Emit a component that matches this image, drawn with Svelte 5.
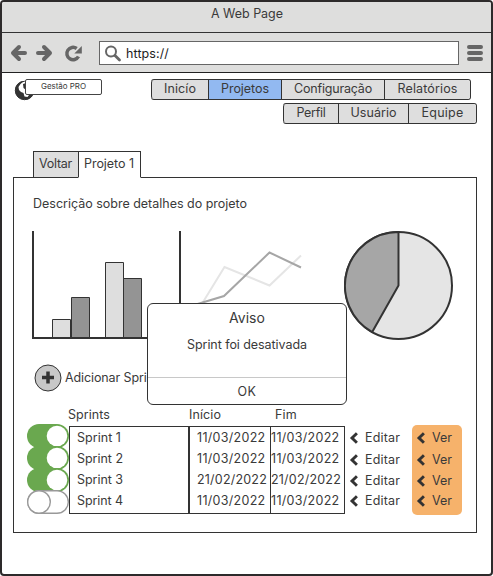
<script>
  const mainNav = [
    { label: 'Inicío', size: 57, text: 32 },
    { label: 'Projetos', size: 73, text: 48, active: true },
    { label: 'Configuração', size: 103, text: 78 },
    { label: 'Relatórios', size: 86, text: 60 },
  ];
  const userNav = [
    { label: 'Perfil', size: 55, text: 29 },
    { label: 'Usuário', size: 70, text: 46 },
    { label: 'Equipe', size: 68, text: 42 },
  ];
  const sprints = [
    { name: 'Sprint 1', start: '11/03/2022', end: '11/03/2022', on: true, h: 22 },
    { name: 'Sprint 2', start: '11/03/2022', end: '11/03/2022', on: true, h: 22 },
    { name: 'Sprint 3', start: '21/02/2022', end: '21/02/2022', on: true, h: 20 },
    { name: 'Sprint 4', start: '11/03/2022', end: '11/03/2022', on: false, h: 20 },
  ];

  // Spreads the letters of a label over the given width.
  function fit(node, width) {
    const natural = node.getBoundingClientRect().width;
    node.style.letterSpacing = `${(width - natural) / node.textContent.length}px`;
  }
</script>

{#snippet chevron()}
  <svg width="9" height="12" viewBox="0 0 9 12"><path d="M7.900 1.200 3 6l4.900 4.800" fill="none" stroke="#333" stroke-width="2.900" /></svg>
{/snippet}

{#snippet nav(items)}
  <nav>
    {#each items as item}
      <button class:active={item.active} style:width="{item.size}px"><span use:fit={item.text}>{item.label}</span></button>
    {/each}
  </nav>
{/snippet}

<div class="window">
  <header class="title"><span use:fit={72}>A Web Page</span></header>
  <div class="toolbar">
    <svg width="88" height="40" viewBox="0 0 88 40">
      <g fill="none" stroke="#666" stroke-width="4" stroke-linecap="round" stroke-linejoin="round">
        <path d="M17 14 11 20l6 6M12 20h11" />
        <path d="M42 14l6 6-6 6M47 20H36" />
        <path d="M76.500 23.500a6.200 6.200 0 1 1-1.800-8" stroke-width="3.500" stroke-linecap="butt" />
      </g>
      <path d="M79.800 13v7.500h-7.500z" fill="#666" />
    </svg>
    <div class="url">
      <svg width="18" height="18" viewBox="0 0 18 18" fill="none" stroke="#666"><circle cx="6" cy="6.500" r="5" stroke-width="2" /><path d="m10 10.500 4.500 4.500" stroke-width="2.800" stroke-linecap="round" /></svg>
      <span use:fit={43}>https://</span>
    </div>
    <svg class="menu" width="16" height="16" viewBox="0 0 16 16" stroke="#666" stroke-width="4" stroke-linecap="round"><path d="M2 2h12M2 8h12M2 14h12" /></svg>
  </div>

  <div class="top">
    <div class="brand">
      <svg width="22" height="22" viewBox="0 0 22 22">
        <circle cx="10.500" cy="11.500" r="9.200" fill="#fff" stroke="#333" stroke-width="1" />
        <path d="M1.200 11.500C1 7.500 3.500 4 7 2.500L10 2 6.500 5 4.500 8l.5 3 2 2 2.500 1 1 3.500 3 .5 1.500-2 4.500-1C18 18.500 15 20.800 11 20.800 5.500 20.800 1.200 17 1.200 11.500z" fill="#333" />
        <path d="m9 5 3-1v7l-2.500-2z" fill="#333" />
      </svg>
      <div class="tag"><span use:fit={45}>Gestão PRO</span></div>
    </div>
    <div class="navs">
      {@render nav(mainNav)}
      <div class="second">{@render nav(userNav)}</div>
    </div>
  </div>

  <div class="tabs">
    <div class="tab off"><span use:fit={33}>Voltar</span></div>
    <div class="tab on"><span use:fit={50}>Projeto 1</span></div>
  </div>

  <main>
    <p><span use:fit={214}>Descrição sobre detalhes do projeto</span></p>
    <div class="charts">
      <svg width="147" height="110" viewBox="32 231 147 110">
        <g stroke="#333" stroke-width="1">
          <path d="M52.500 338v-18.500h18V338z" fill="#dedede" /><path d="M71.500 338v-40.500h18V338z" fill="#949494" />
          <path d="M105.500 338v-75.500h18V338z" fill="#dedede" /><path d="M123.500 338v-59.500h18V338z" fill="#949494" />
        </g>
        <path d="M33 231v107h117" fill="none" stroke="#333" stroke-width="2" />
      </svg>
      <svg width="165" height="110" viewBox="179 231 165 110" fill="none" stroke-width="2">
        <path d="M180 231v107h120" stroke="#333" />
        <path d="M181 338 224.500 267l45 18.500 31.500-30" stroke="#e5e5e5" />
        <path d="M181 309 224 296l45.500-43.500 31.500 15" stroke="#a6a6a6" />
      </svg>
      <svg width="110" height="110" viewBox="344 231 110 110" stroke="#333" stroke-width="2" stroke-linejoin="round">
        <circle cx="398.500" cy="285.500" r="53.500" fill="#e5e5e5" />
        <path d="M398.500 285.500V232a53.500 53.500 0 0 0-26.300 100.100z" fill="#a6a6a6" />
      </svg>
    </div>

    <div class="add">
      <svg width="28" height="28" viewBox="0 0 28 28"><circle cx="14" cy="14" r="13" fill="#c8c8c8" stroke="#333" /><path d="M14 7.500v12M8 13.500h12" stroke="#333" stroke-width="3.500" /></svg>
      <span use:fit={93}>Adicionar Sprint</span>
    </div>

    <div class="heads"><div><span use:fit={42}>Sprints</span></div><div><span use:fit={32}>Início</span></div><div><span use:fit={22}>Fim</span></div></div>

    <div class="list">
      <div class="toggles">
        {#each sprints as s}
          <svg width="42" height="22" viewBox="0 0 42 22" overflow="visible">
            {#if s.on}
              <rect y="-1" width="42" height="24" rx="12" fill="#6aa84f" /><circle cx="30" cy="11" r="10.300" fill="#fff" />
            {:else}
              <rect x=".7" y="-.3" width="40.600" height="22.600" rx="11.300" fill="#fff" stroke="#999" stroke-width="1.400" /><circle cx="12" cy="11" r="11.300" fill="#fff" stroke="#999" stroke-width="1.400" />
            {/if}
          </svg>
        {/each}
      </div>
      <div class="table">
        <div class="col names">{#each sprints as s, i}<div><span use:fit={i ? 46 : 44}>{s.name}</span></div>{/each}</div>
        <div class="col starts">{#each sprints as s}<div><span use:fit={s.start[0] === '2' ? 70 : 68.5}>{s.start}</span></div>{/each}</div>
        <div class="col ends">{#each sprints as s}<div><span use:fit={s.end[0] === '2' ? 70 : 68.5}>{s.end}</span></div>{/each}</div>
      </div>
      <div class="edit">{#each sprints as s}<div style:height="{s.h}px">{@render chevron()}<span use:fit={35}>Editar</span></div>{/each}</div>
      <div class="view">{#each sprints as s}<div style:height="{s.h}px">{@render chevron()}<span use:fit={20}>Ver</span></div>{/each}</div>
    </div>
  </main>

  <div class="dialog" role="alertdialog">
    <h2><span use:fit={36}>Aviso</span></h2>
    <div class="msg"><span use:fit={120}>Sprint foi desativada</span></div>
    <button><span use:fit={19}>OK</span></button>
  </div>
</div>

<style>
  :global(body) { background: #fff; }
  * { box-sizing: border-box; }
  svg { display: block; flex: none; }
  span { white-space: nowrap; }
  .window {
    position: relative; width: 493px; height: 576px; overflow: hidden;
    border: 2px solid #2d2a2b; border-radius: 4px; background: #fff;
    font: 12.5px/16px Inter, "Liberation Sans", sans-serif; color: #3a3a3a;
  }
  .title { height: 31px; padding: 4px 0 0 209px; background: #dededd; border-bottom: 1px solid #333; }
  .toolbar { display: flex; height: 40px; background: #dededd; border-bottom: 1px solid #222; }
  .url { display: flex; align-items: center; gap: 3px; margin: 8px 0 0 9px; width: 360px; height: 24px; padding: 1px 0 0 5px; border: 1px solid #666; background: #fff; color: #222; }
  .menu { margin: 12px 0 0 8px; }
  .top { display: flex; height: 78px; padding-top: 6px; }
  .brand { display: flex; width: 149px; padding-left: 12px; }
  .tag { width: 77px; height: 16px; margin-left: -11px; background: #fff; border: 1px solid #444; border-radius: 2px; font-size: 8px; line-height: 13px; padding-left: 15px; z-index: 1; }
  nav { display: flex; width: max-content; border: 1px solid #333; border-left: 0; border-radius: 3px; }
  nav button { display: flex; justify-content: center; height: 19px; padding: 1px 0 0; border: 0; border-left: 1px solid #333; background: #dedede; font: inherit; color: #3a3a3a; }
  nav button:first-child { border-radius: 3px 0 0 3px; }
  nav button:last-child { border-radius: 0 3px 3px 0; }
  nav button.active { background: #92b9f1; }
  .second { margin: 3px 0 0 132px; }
  .tabs { display: flex; padding-left: 31px; height: 27px; position: relative; z-index: 1; }
  .tab { height: 27px; border: 1px solid #333; padding: 4px 0 0 5px; }
  .off { width: 45px; background: #dedede; border-right: 0; }
  .on { width: 63px; background: #fff; border-bottom-color: #fff; }
  main { width: 464px; height: 356px; margin: -1px 0 0 11px; border: 1px solid #333; }
  p { margin: 0; height: 53px; padding: 18px 0 0 19px; }
  .charts { display: flex; height: 110px; padding-left: 18px; }
  .add { display: flex; align-items: center; gap: 3px; height: 28px; margin: 23px 0 0 20px; }
  .heads { display: flex; height: 33px; padding: 15px 0 0 54px; }
  .heads div { width: 121px; }
  .heads div + div { width: 86px; }
  .list { display: flex; height: 90px; padding-left: 13px; }
  .table { display: flex; width: 276px; height: 88px; margin-top: 1px; border: 1px solid #333; background: #fff; }
  .col div { height: 21px; display: flex; align-items: center; }
  .names { width: 120px; padding-left: 7px; border-right: 2px solid #333; }
  .starts { width: 81px; padding-left: 7px; border-right: 1px solid #333; }
  .edit div, .view div { display: flex; align-items: center; }
  .edit { padding: 2px 0 0 4px; width: 67px; }
  .edit span, .view span { margin-left: 7px; }
  .view { width: 50px; height: 90px; padding: 2px 0 0 4px; background: #f6b26b; border-radius: 5px; }
  .dialog { position: absolute; left: 145px; top: 301px; width: 200px; height: 102px; background: #fff; border: 1px solid #333; border-radius: 6px; text-align: center; }
  h2 { margin: 5px 0 0; font-size: 14px; line-height: 18px; font-weight: 400; }
  .msg { height: 50px; padding-top: 10px; }
  .dialog button { width: 100%; height: 27px; border: 0; border-top: 1px solid #c8c8c8; background: none; font: inherit; color: #3a3a3a; padding: 1px 0 0; }
</style>
